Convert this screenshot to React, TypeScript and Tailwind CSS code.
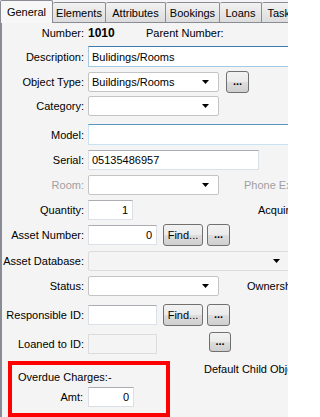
import React from "react";

const Arrow = () => (
  <svg width="7" height="4" viewBox="0 0 7 4" className="block">
    <path d="M0 0H7L3.5 4Z" fill="#000" />
  </svg>
);

const Select = ({ w, value = "", disabled = false }: { w: string; value?: string; disabled?: boolean }) => (
  <div
    className={`${w} h-[20px] flex items-center justify-between pl-[3px] pr-[9px] rounded-[2px] border ${
      disabled ? "bg-[#f4f4f4] border-[#dcdcdc]" : "bg-white border-[#c4c4c4]"
    }`}
  >
    <span className="truncate">{value}</span>
    <Arrow />
  </div>
);

const Btn = ({ w, label, h = "h-[22px]" }: { w: string; label: string; h?: string }) => (
  <div
    className={`${w} ${h} shrink-0 rounded-[3px] border border-[#707070] bg-[linear-gradient(#f2f2f2_0%,#ebebeb_48%,#dddddd_52%,#cfcfcf_100%)] flex items-center justify-center`}
  >
    <span className={label === "..." ? "font-bold text-[11px] tracking-[0px] leading-none -mt-[2px]" : ""}>{label}</span>
  </div>
);

const Label = ({ children, gray = false }: { children: React.ReactNode; gray?: boolean }) => (
  <div className={`w-[84px] shrink-0 text-right whitespace-nowrap ${gray ? "text-[#a0a0a0]" : "text-black"}`}>{children}</div>
);

const inputNormal = "bg-white border border-[#dbdfe6] border-t-[#abadb3]";
const inputFocus = "bg-white border border-[#a4c9e3] border-t-[#3d7bad]";
const inputHover = "bg-white border border-[#c7e2f1] border-t-[#5794bf]";

export default function App() {
  const tabs = [
    { t: "Elements", w: "w-[53px]" },
    { t: "Attributes", w: "w-[60px]" },
    { t: "Bookings", w: "w-[54px]" },
    { t: "Loans", w: "w-[42px]" },
    { t: "Tasks", w: "w-[40px]" },
  ];
  return (
    <div className="w-[288px] h-[417px] overflow-hidden bg-[#f4f4f4] text-[11px] leading-[14px] font-['Liberation_Sans',Arial,sans-serif] text-black">
      {/* tab strip */}
      <div className="flex h-[22px] relative z-10">
        <div className="w-[53px] h-[23px] shrink-0 bg-[#f7f7f7] border border-b-0 border-[#898c95] rounded-t-[2px] flex items-center justify-center pb-[1px]">
          General
        </div>
        {tabs.map((tab) => (
          <div
            key={tab.t}
            className={`${tab.w} shrink-0 mt-[2px] h-[20px] border-t border-r border-[#898c95] rounded-t-[2px] bg-[linear-gradient(#f2f2f2,#dcdcdc)] flex items-center justify-center whitespace-nowrap`}
          >
            {tab.t}
          </div>
        ))}
      </div>
      {/* panel */}
      <div className="h-[395px] border-t border-l-2 border-[#898c95] bg-[#f4f4f4] flex flex-col">
        {/* Number */}
        <div className="mt-[1px] h-[18px] flex items-center -ml-[2px]">
          <Label>Number:</Label>
          <div className="ml-[4px] w-[58px] font-bold text-[12px]">1010</div>
          <div className="whitespace-nowrap">Parent Number:</div>
        </div>
        {/* Description */}
        <div className="mt-[4px] h-[21px] flex items-center -ml-[2px]">
          <Label>Description:</Label>
          <div className={`ml-[4px] w-[210px] h-[21px] shrink-0 flex items-center pl-[3px] ${inputFocus}`}>Bulidings/Rooms</div>
        </div>
        {/* Object Type */}
        <div className="mt-[4px] h-[22px] flex items-center -ml-[2px]">
          <Label>Object Type:</Label>
          <div className="ml-[4px]"><Select w="w-[131px]" value="Buildings/Rooms" /></div>
          <div className="ml-[7px]"><Btn w="w-[23px]" label="..." /></div>
        </div>
        {/* Category */}
        <div className="mt-[3px] h-[20px] flex items-center -ml-[2px]">
          <Label>Category:</Label>
          <div className="ml-[4px]"><Select w="w-[131px]" /></div>
        </div>
        {/* Model */}
        <div className="mt-[8px] h-[21px] flex items-center -ml-[2px]">
          <Label>Model:</Label>
          <div className={`ml-[4px] w-[210px] h-[21px] shrink-0 ${inputHover}`} />
        </div>
        {/* Serial */}
        <div className="mt-[5px] h-[20px] flex items-center -ml-[2px]">
          <Label>Serial:</Label>
          <div className={`ml-[4px] w-[171px] h-[20px] shrink-0 flex items-center pl-[3px] ${inputNormal}`}>05135486957</div>
        </div>
        {/* Room */}
        <div className="mt-[5px] h-[20px] flex items-center -ml-[2px]">
          <Label gray>Room:</Label>
          <div className="ml-[4px]"><Select w="w-[131px]" /></div>
          <div className="ml-[25px] whitespace-nowrap text-[#a0a0a0]">Phone Ext</div>
        </div>
        {/* Quantity */}
        <div className="mt-[5px] h-[20px] flex items-center -ml-[2px]">
          <Label>Quantity:</Label>
          <div className={`ml-[4px] w-[45px] h-[20px] shrink-0 flex items-center justify-end pr-[4px] ${inputNormal}`}>1</div>
          <div className="ml-[125px] whitespace-nowrap">Acquired</div>
        </div>
        {/* Asset Number */}
        <div className="mt-[4px] h-[22px] flex items-center -ml-[2px]">
          <Label>Asset Number:</Label>
          <div className={`ml-[4px] w-[69px] h-[20px] shrink-0 flex items-center justify-end pr-[4px] ${inputNormal}`}>0</div>
          <div className="ml-[6px]"><Btn w="w-[40px]" label="Find..." /></div>
          <div className="ml-[4px]"><Btn w="w-[23px]" label="..." /></div>
        </div>
        {/* Asset Database */}
        <div className="mt-[5px] h-[20px] flex items-center -ml-[2px]">
          <Label>Asset Database:</Label>
          <div className="ml-[4px]"><Select w="w-[202px]" disabled /></div>
        </div>
        {/* Status */}
        <div className="mt-[5px] h-[20px] flex items-center -ml-[2px]">
          <Label>Status:</Label>
          <div className="ml-[4px]"><Select w="w-[131px]" /></div>
          <div className="ml-[28px] whitespace-nowrap">Ownership</div>
        </div>
        {/* Responsible ID */}
        <div className="mt-[8px] h-[22px] flex items-center -ml-[2px]">
          <Label>Responsible ID:</Label>
          <div className={`ml-[4px] w-[69px] h-[20px] shrink-0 ${inputNormal}`} />
          <div className="ml-[6px]"><Btn w="w-[40px]" label="Find..." /></div>
          <div className="ml-[4px]"><Btn w="w-[23px]" label="..." /></div>
        </div>
        {/* Loaned to ID */}
        <div className="mt-[6px] h-[22px] flex -ml-[2px]">
          <div className="self-end h-[20px] flex items-center"><Label>Loaned to ID:</Label></div>
          <div className="self-end ml-[4px] w-[69px] h-[20px] shrink-0 bg-[#f4f4f4] border border-[#dcdcdc]" />
          <div className="self-start ml-[52px]"><Btn w="w-[22px]" h="h-[20px]" label="..." /></div>
        </div>
        {/* Overdue box + Default Child */}
        <div className="mt-[7px] h-[56px] flex -ml-[2px]">
          <div className="ml-[8px] w-[162px] h-[56px] shrink-0 border-4 border-[#ff0000] flex flex-col">
            <div className="pt-[5px] pl-[6px] h-[19px] whitespace-nowrap">Overdue Charges:-</div>
            <div className="mt-[3px] flex items-center">
              <div className="w-[71px] text-right">Amt:</div>
              <div className={`ml-[5px] w-[46px] h-[20px] shrink-0 flex items-center justify-end pr-[4px] ${inputNormal}`}>0</div>
            </div>
          </div>
          <div className="ml-[34px] pt-[1px] whitespace-nowrap">Default Child Objects</div>
        </div>
      </div>
    </div>
  );
}
